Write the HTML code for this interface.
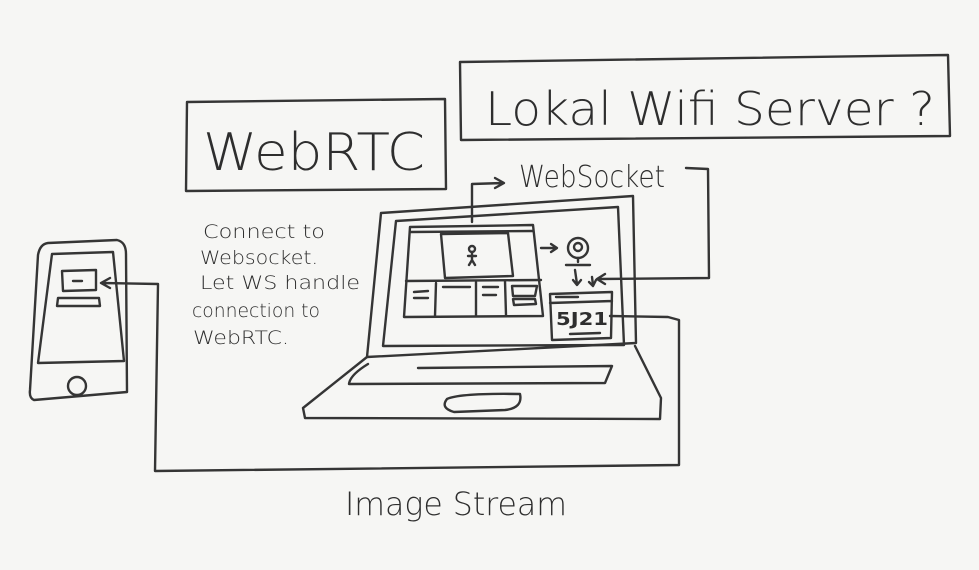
<!DOCTYPE html>
<html><head><meta charset="utf-8"><style>
html,body{margin:0;padding:0;background:#f6f6f4;}
svg{display:block}
text{font-family:"DejaVu Sans","Liberation Sans",sans-serif;fill:#2e2e2e;font-weight:200}
</style></head><body>
<svg width="979" height="570" viewBox="0 0 979 570" xmlns="http://www.w3.org/2000/svg">
<rect width="979" height="570" fill="#f6f6f4"/>
<g fill="none" stroke="#353535" stroke-width="2.4" stroke-linecap="round" stroke-linejoin="round">
<!-- WebRTC box -->
<path d="M187 102 L445 99 L446 189 L186 191 Z"/>
<!-- Lokal wifi box -->
<path d="M460 62 L948 55 L950 136 L461 140 Z"/>
<!-- websocket arrows -->
<path d="M472 222 L472 184 L503 183 M495 178 L504 183 L495 188"/>
<path d="M686 168 L708 169 L709 278 L598 279 M605 274 L597 279 L605 284"/>
<!-- laptop lid -->
<path d="M381 213 L633 196 L636 343 L367 357 Z"/>
<path d="M396 221 L618 207 L624 345 L383 346 Z"/>
<!-- browser window -->
<path d="M410 227 L533 225 L543 316 L404 317 Z"/>
<path d="M411 232 L533 231"/>
<path d="M406 281 L541 280"/>
<path d="M441 234 L508 233 L513 276 L445 278 Z"/>
<path d="M436 283 L435 316 M476 282 L476 316 M505 281 L506 315"/>
<path d="M414 292 L428 291 M414 298 L428 298 M443 287 L470 287 M483 287 L498 287 M483 295 L496 295 M512 286 L537 286 L535 296 L513 296 Z M513 299 L535 299 L536 304 L514 305 Z"/>
<circle cx="472" cy="249" r="3"/>
<path d="M472 252 L472 260 M468 256 L476 256 M469 265 L472 260 L475 265"/>
<path d="M541 248 L556 248 M551 244 L557 248 L551 252"/>
<!-- webcam -->
<circle cx="578" cy="248" r="10"/>
<circle cx="578" cy="247" r="4"/>
<path d="M578 258 L578 262 M566 265 L590 265"/>
<path d="M575 270 L577 284 M573 280 L577 285 L581 280 M592 277 L593 285 M589 282 L593 286 M596 280 L593 286"/>
<!-- card -->
<path d="M550 294 L612 292 L611 338 L552 340 Z M550 303 L612 301"/>
<path d="M556 297 L578 297 M570 334 L600 333"/>
<!-- long line -->
<path d="M610 316 L668 317 L679 320 L679 465 L155 471 L158 284 L102 283 M110 278 L101 283 L110 288"/>
<!-- laptop base -->
<path d="M367 357 L303 408 L305 418 L660 419 L661 398 L635 346"/>
<path d="M368 364 Q350 375 349 384 L605 383 L612 366 L418 368"/>
<path d="M447 399 Q460 393 520 394 Q523 408 505 410 L454 412 Q440 408 447 399 Z"/>
<!-- phone -->
<path d="M48 243 L117 240 Q126 242 126 254 L127 392 L34 400 Q29 398 30 390 L38 255 Q40 244 48 243 Z"/>
<path d="M52 254 L113 252 L124 361 L38 363 Z"/>
<circle cx="77" cy="386" r="9"/>
<path d="M62 271 L96 270 L96 290 L63 291 Z M73 281 L82 281"/>
<path d="M58 298 L99 298 L100 306 L57 306 Z"/>
</g>
<text x="203" y="170" font-size="52" textLength="222" lengthAdjust="spacingAndGlyphs">WebRTC</text>
<text x="485" y="125" font-size="46" textLength="450" lengthAdjust="spacingAndGlyphs">Lokal Wifi Server ?</text>
<text x="519" y="187" font-size="30" textLength="146" lengthAdjust="spacingAndGlyphs">WebSocket</text>
<text x="345" y="515" font-size="32" textLength="222" lengthAdjust="spacingAndGlyphs">Image Stream</text>
<g font-size="19">
<text x="203" y="238" textLength="122" lengthAdjust="spacingAndGlyphs">Connect to</text>
<text x="200" y="264" textLength="118" lengthAdjust="spacingAndGlyphs">Websocket.</text>
<text x="200" y="289" textLength="160" lengthAdjust="spacingAndGlyphs">Let WS handle</text>
<text x="192" y="317" textLength="128" lengthAdjust="spacingAndGlyphs">connection to</text>
<text x="193" y="344" textLength="96" lengthAdjust="spacingAndGlyphs">WebRTC.</text>
<text x="556" y="325" font-size="18" textLength="52" lengthAdjust="spacingAndGlyphs" style="font-weight:bold">5J21</text>
</g>
</svg>
</body></html>
